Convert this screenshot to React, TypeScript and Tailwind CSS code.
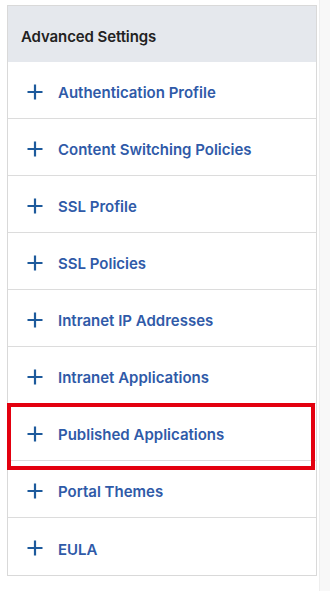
const items = [
  "Authentication Profile",
  "Content Switching Policies",
  "SSL Profile",
  "SSL Policies",
  "Intranet IP Addresses",
  "Intranet Applications",
  "Published Applications",
  "Portal Themes",
  "EULA",
];

const PlusIcon = () => (
  <svg width="16" height="16" viewBox="0 0 16 16" className="shrink-0 -translate-y-[2px]">
    <path d="M8 0.5v15M0.5 8h15" stroke="#1d5a9c" strokeWidth="2.2" fill="none" />
  </svg>
);

export default function App() {
  return (
    <div className="relative flex h-[591px] w-[330px] bg-white font-['Inter',sans-serif]">
      <div className="ml-[7px] mt-[5px] w-[310px] self-start border border-[#d9d9d9] bg-white">
        {/* Header */}
        <div className="flex h-[56px] items-center bg-[#e5e8ed] px-[13px] pt-[6px]">
          <h2 className="text-[15px] font-semibold tracking-[-0.1px] text-[#222]">Advanced Settings</h2>
        </div>
        <div className="divide-y divide-[#dcdcdc]">
          {items.map((label) => (
            <div key={label} className="flex h-[57px] items-center pl-[19px] pt-[7px]">
              <PlusIcon />
              <span className="ml-[15px] text-[15px] font-semibold text-[#2f5aa8]">{label}</span>
            </div>
          ))}
        </div>
      </div>
      <div className="ml-auto w-[11px] border-l border-[#eeeeee] bg-[#f8f8f8]"></div>

      {/* Annotation highlight */}
      <div className="pointer-events-none absolute left-[7px] top-[403px] h-[67px] w-[308px] border-[4px] border-[#e3000f]"></div>
    </div>
  );
}
